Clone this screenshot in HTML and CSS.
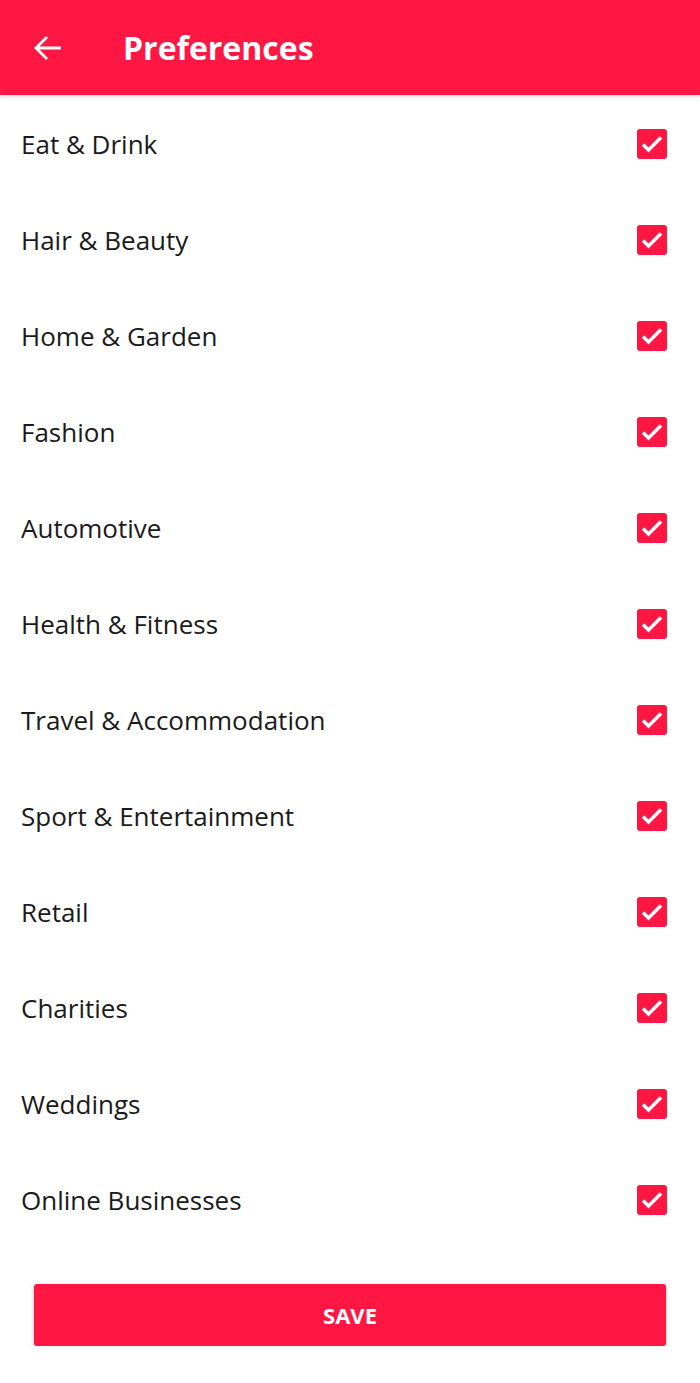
FILE: index.html
```html
<!DOCTYPE html>
<html lang="en">
<head>
    <meta charset="UTF-8">
    <meta name="viewport" content="width=device-width, initial-scale=1.0">
    <title>Preferences</title>
    <link rel="stylesheet" href="styles.css">
</head>
<body>
    <div class="app-bar">
        <button class="back-btn" aria-label="Back">
            <svg width="30" height="30" viewBox="0 0 30 30"><path d="M28 15H3M14 4L3 15l11 11" fill="none" stroke="#fff" stroke-width="2.8"/></svg>
        </button>
        <h1>Preferences</h1>
    </div>

    <ul class="pref-list">
        <li class="pref-row"><span>Eat &amp; Drink</span><span class="check"></span></li>
        <li class="pref-row"><span>Hair &amp; Beauty</span><span class="check"></span></li>
        <li class="pref-row"><span>Home &amp; Garden</span><span class="check"></span></li>
        <li class="pref-row"><span>Fashion</span><span class="check"></span></li>
        <li class="pref-row"><span>Automotive</span><span class="check"></span></li>
        <li class="pref-row"><span>Health &amp; Fitness</span><span class="check"></span></li>
        <li class="pref-row"><span>Travel &amp; Accommodation</span><span class="check"></span></li>
        <li class="pref-row"><span>Sport &amp; Entertainment</span><span class="check"></span></li>
        <li class="pref-row"><span>Retail</span><span class="check"></span></li>
        <li class="pref-row"><span>Charities</span><span class="check"></span></li>
        <li class="pref-row"><span>Weddings</span><span class="check"></span></li>
        <li class="pref-row"><span>Online Businesses</span><span class="check"></span></li>
    </ul>

    <div class="save-row">
        <button class="btn-save">SAVE</button>
    </div>
</body>
</html>
```

FILE: styles.css
```css
body {
    font-family: "Open Sans", sans-serif;
    margin: 0;
    background-color: #fff;
    color: #1a1a1a;
}
.app-bar {
    height: 95px;
    background-color: #ff1744;
    display: flex;
    align-items: center;
    box-shadow: 0 2px 4px rgba(0, 0, 0, 0.15);
    position: relative;
}
.back-btn {
    background: none;
    border: none;
    padding: 0;
    margin-left: 33px;
    width: 30px;
    height: 30px;
    display: flex;
}
.app-bar h1 {
    margin: 0 0 0 60px;
    color: #fff;
    font-size: 32px;
    font-weight: 700;
}
.pref-list {
    list-style: none;
    margin: 0;
    padding: 1px 0 0;
}
.pref-row {
    height: 96px;
    display: flex;
    align-items: center;
    justify-content: space-between;
    padding: 0 33px 0 21px;
    font-size: 26px;
}
.check {
    width: 30px;
    height: 30px;
    border-radius: 3px;
    background-color: #ff1744;
    background-image: url("data:image/svg+xml;utf8,<svg xmlns='http://www.w3.org/2000/svg' viewBox='0 0 30 30'><path d='M6 15.5l5.5 5.5L24 8.5' fill='none' stroke='white' stroke-width='3.4'/></svg>");
    background-size: 30px 30px;
    background-position: center;
    background-repeat: no-repeat;
}
.save-row {
    padding: 36px 34px 0;
}
.btn-save {
    width: 100%;
    height: 62px;
    border: none;
    border-radius: 3px;
    background-color: #ff1744;
    color: #fff;
    font-family: "Open Sans", sans-serif;
    font-size: 22px;
    font-weight: 700;
    box-shadow: 0 2px 4px rgba(0, 0, 0, 0.25);
}
```
